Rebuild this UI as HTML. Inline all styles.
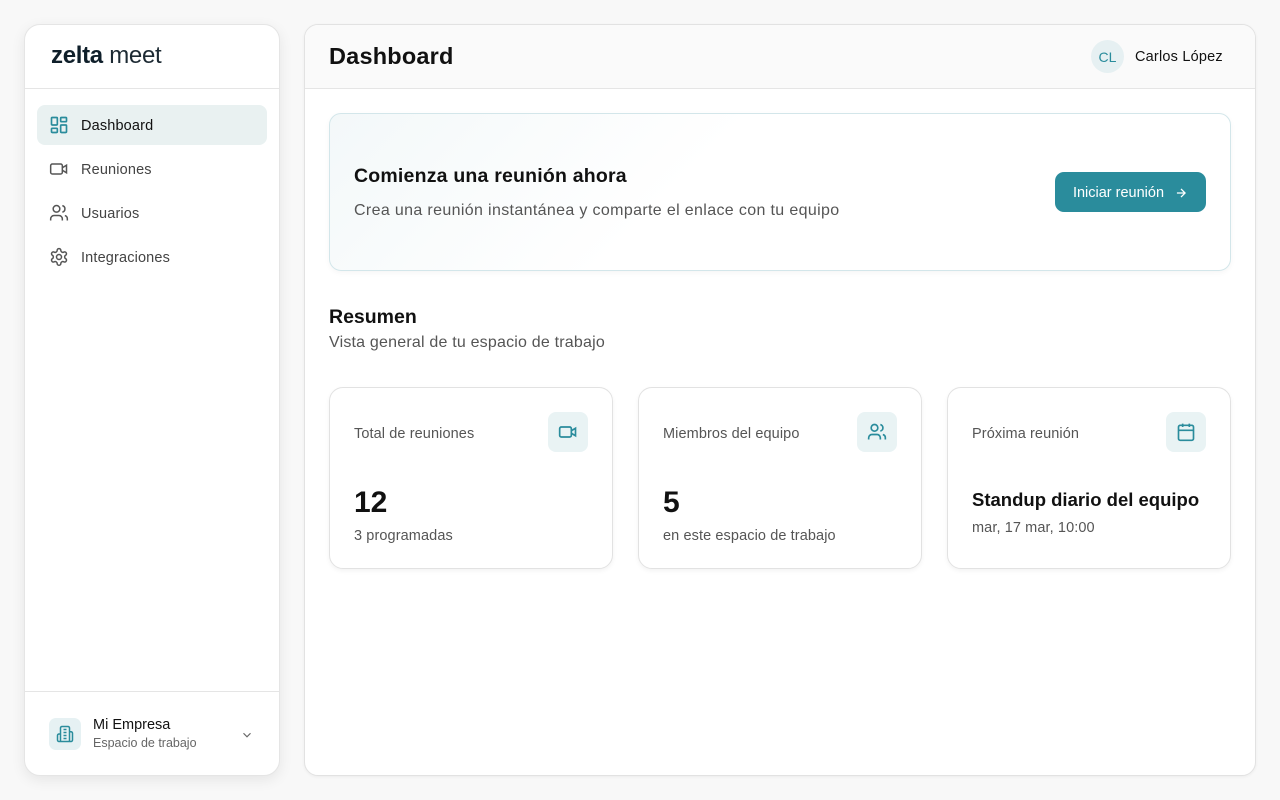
<!DOCTYPE html>
<html><head><meta charset="utf-8"><style>
*{box-sizing:border-box;margin:0;padding:0}
body{width:1280px;height:800px;background:#f8f8f8;font-family:"Liberation Sans",sans-serif;color:#111;position:relative;overflow:hidden}
.side{position:absolute;left:24px;top:24px;width:256px;height:752px;background:#fff;border:1px solid #e5e5e5;border-radius:16px;box-shadow:0 4px 14px rgba(0,0,0,.08)}
.logo{height:64px;border-bottom:1px solid #e5e5e5;padding:17px 0 0 26px;font-size:24px;color:#0f1f2a;letter-spacing:-0.3px}
.logo b{font-weight:700}
.logo span{font-weight:400;color:#1d2a33}
.nav{padding:16px 12px}
.item{height:40px;border-radius:8px;display:flex;align-items:center;padding-left:12px;padding-top:2px;font-size:14.5px;color:#444;margin-bottom:4px;letter-spacing:.15px}
.item svg{width:20px;height:20px;margin-right:12px;margin-top:-2px}
.item.act{background:#e9f1f1;color:#111}
.foot{position:absolute;left:0;right:0;top:666px;border-top:1px solid #e5e5e5;height:84px;display:flex;align-items:center;padding-left:24px}
.ficon{width:32px;height:32px;border-radius:7px;background:#e6f1f3;display:flex;align-items:center;justify-content:center;margin-right:12px}
.main{position:absolute;left:304px;top:24px;width:952px;height:752px;background:#fff;border:1px solid #e2e2e2;border-radius:14px;overflow:hidden;box-shadow:0 1px 3px rgba(0,0,0,.05)}
.hdr{height:64px;background:#fafafa;border-bottom:1px solid #e5e5e5;position:relative}
.hdr h1{position:absolute;left:24px;top:18px;font-size:23.5px;font-weight:600;letter-spacing:.2px}
.av{position:absolute;left:786px;top:15px;width:33px;height:33px;border-radius:50%;background:#e6f0f2;color:#2a8c9c;font-size:14px;display:flex;align-items:center;justify-content:center}
.uname{position:absolute;left:830px;top:24px;font-size:14.5px;font-weight:500;letter-spacing:.2px}
.hero{position:absolute;left:24px;top:88px;width:902px;height:158px;border:1px solid #d3e6ea;border-radius:12px;background:linear-gradient(135deg,#f3f8f9,#fff 40%);box-shadow:0 2px 6px rgba(0,0,0,.04)}
.hero h2{position:absolute;left:24px;top:51px;font-size:19.5px;font-weight:600;letter-spacing:.2px}
.hero p{position:absolute;left:24px;top:88px;font-size:16px;color:#555;letter-spacing:.35px}
.btn{position:absolute;left:725px;top:58px;width:151px;height:40px;border-radius:9px;background:#2a8c9c;color:#fff;font-size:14.5px;display:flex;align-items:center;justify-content:center;gap:10px;padding-top:1px}
.rt{position:absolute;left:24px;top:281px;font-size:19.5px;font-weight:600}
.rs{position:absolute;left:24px;top:309px;font-size:16px;color:#555;letter-spacing:.2px}
.card{position:absolute;top:362px;width:284px;height:182px;border:1px solid #e2e2e2;border-radius:14px;box-shadow:0 2px 5px rgba(0,0,0,.05)}
.card .t{position:absolute;left:24px;top:38px;font-size:14.5px;color:#555;letter-spacing:.1px}
.card .ic{position:absolute;right:24px;top:24px;width:40px;height:40px;border-radius:8px;background:#e9f3f4;display:flex;align-items:center;justify-content:center}
.card .n{position:absolute;left:24px;top:98px;font-size:30px;font-weight:700}
.card .s{position:absolute;left:24px;top:140px;font-size:14.5px;color:#555;letter-spacing:.1px}
</style></head><body>
<div class="side">
<div class="logo"><b>zelta</b> <span>meet</span></div>
<div class="nav">
<div class="item act"><svg viewBox="0 0 24 24" fill="none" stroke="#2a8c9c" stroke-width="2"><rect x="3" y="3" width="7" height="9" rx="1"/><rect x="14" y="3" width="7" height="5" rx="1"/><rect x="14" y="12" width="7" height="9" rx="1"/><rect x="3" y="16" width="7" height="5" rx="1"/></svg>Dashboard</div>
<div class="item"><svg viewBox="0 0 24 24" fill="none" stroke="#555" stroke-width="1.8"><rect x="2" y="6" width="14" height="12" rx="2"/><path d="M16 10.5l5-3v9l-5-3"/></svg>Reuniones</div>
<div class="item"><svg viewBox="0 0 24 24" fill="none" stroke="#555" stroke-width="1.8"><circle cx="9" cy="7" r="4"/><path d="M2 21v-2a4 4 0 0 1 4-4h6a4 4 0 0 1 4 4v2M16 3.1a4 4 0 0 1 0 7.8M22 21v-2a4 4 0 0 0-3-3.9"/></svg>Usuarios</div>
<div class="item"><svg viewBox="0 0 24 24" fill="none" stroke="#555" stroke-width="1.8"><circle cx="12" cy="12" r="3"/><path d="M12.2 2h-.4a2 2 0 0 0-2 2v.2a2 2 0 0 1-1 1.7l-.4.3a2 2 0 0 1-2 0l-.2-.1a2 2 0 0 0-2.7.7l-.2.4a2 2 0 0 0 .7 2.7l.2.1a2 2 0 0 1 1 1.7v.5a2 2 0 0 1-1 1.7l-.2.1a2 2 0 0 0-.7 2.7l.2.4a2 2 0 0 0 2.7.7l.2-.1a2 2 0 0 1 2 0l.4.3a2 2 0 0 1 1 1.7v.2a2 2 0 0 0 2 2h.4a2 2 0 0 0 2-2v-.2a2 2 0 0 1 1-1.7l.4-.3a2 2 0 0 1 2 0l.2.1a2 2 0 0 0 2.7-.7l.2-.4a2 2 0 0 0-.7-2.7l-.2-.1a2 2 0 0 1-1-1.7v-.5a2 2 0 0 1 1-1.7l.2-.1a2 2 0 0 0 .7-2.7l-.2-.4a2 2 0 0 0-2.7-.7l-.2.1a2 2 0 0 1-2 0l-.4-.3a2 2 0 0 1-1-1.7V4a2 2 0 0 0-2-2z"/></svg>Integraciones</div>
</div>
<div class="foot"><div class="ficon"><svg width="18" height="18" viewBox="0 0 24 24" fill="none" stroke="#2a8c9c" stroke-width="2"><path d="M6 22V4a2 2 0 0 1 2-2h8a2 2 0 0 1 2 2v18zM6 12H4a2 2 0 0 0-2 2v6a2 2 0 0 0 2 2h2M18 9h2a2 2 0 0 1 2 2v9a2 2 0 0 1-2 2h-2M10 6h4M10 10h4M10 14h4M10 18h4"/></svg></div>
<div><div style="font-size:14.5px;font-weight:500">Mi Empresa</div><div style="font-size:12.5px;color:#666;margin-top:3px">Espacio de trabajo</div></div>
<svg style="position:absolute;left:215px;top:36px" width="14" height="14" viewBox="0 0 24 24" fill="none" stroke="#666" stroke-width="2"><path d="M6 9l6 6 6-6"/></svg></div>
</div>
<div class="main">
<div class="hdr"><h1>Dashboard</h1><div class="av">CL</div><div class="uname">Carlos López</div></div>
<div class="hero"><h2>Comienza una reunión ahora</h2><p>Crea una reunión instantánea y comparte el enlace con tu equipo</p>
<div class="btn">Iniciar reunión <svg width="14" height="14" viewBox="0 0 24 24" fill="none" stroke="#fff" stroke-width="2.2"><path d="M5 12h14M12 5l7 7-7 7"/></svg></div></div>
<div class="rt">Resumen</div><div class="rs">Vista general de tu espacio de trabajo</div>
<div class="card" style="left:24px"><div class="t">Total de reuniones</div><div class="ic"><svg width="20" height="20" viewBox="0 0 24 24" fill="none" stroke="#2a8c9c" stroke-width="2"><rect x="2" y="6" width="14" height="12" rx="2"/><path d="M16 10.5l5-3v9l-5-3"/></svg></div><div class="n">12</div><div class="s">3 programadas</div></div>
<div class="card" style="left:333px"><div class="t">Miembros del equipo</div><div class="ic"><svg width="20" height="20" viewBox="0 0 24 24" fill="none" stroke="#2a8c9c" stroke-width="2"><circle cx="9" cy="7" r="4"/><path d="M2 21v-2a4 4 0 0 1 4-4h6a4 4 0 0 1 4 4v2M16 3.1a4 4 0 0 1 0 7.8M22 21v-2a4 4 0 0 0-3-3.9"/></svg></div><div class="n">5</div><div class="s">en este espacio de trabajo</div></div>
<div class="card" style="left:642px"><div class="t">Próxima reunión</div><div class="ic"><svg width="20" height="20" viewBox="0 0 24 24" fill="none" stroke="#2a8c9c" stroke-width="2"><rect x="3" y="4" width="18" height="18" rx="2"/><path d="M8 2v4M16 2v4M3 10h18"/></svg></div><div class="n" style="font-size:18.5px;font-weight:600;top:101px">Standup diario del equipo</div><div class="s" style="top:132px">mar, 17 mar, 10:00</div></div>
</div>
</body></html>
